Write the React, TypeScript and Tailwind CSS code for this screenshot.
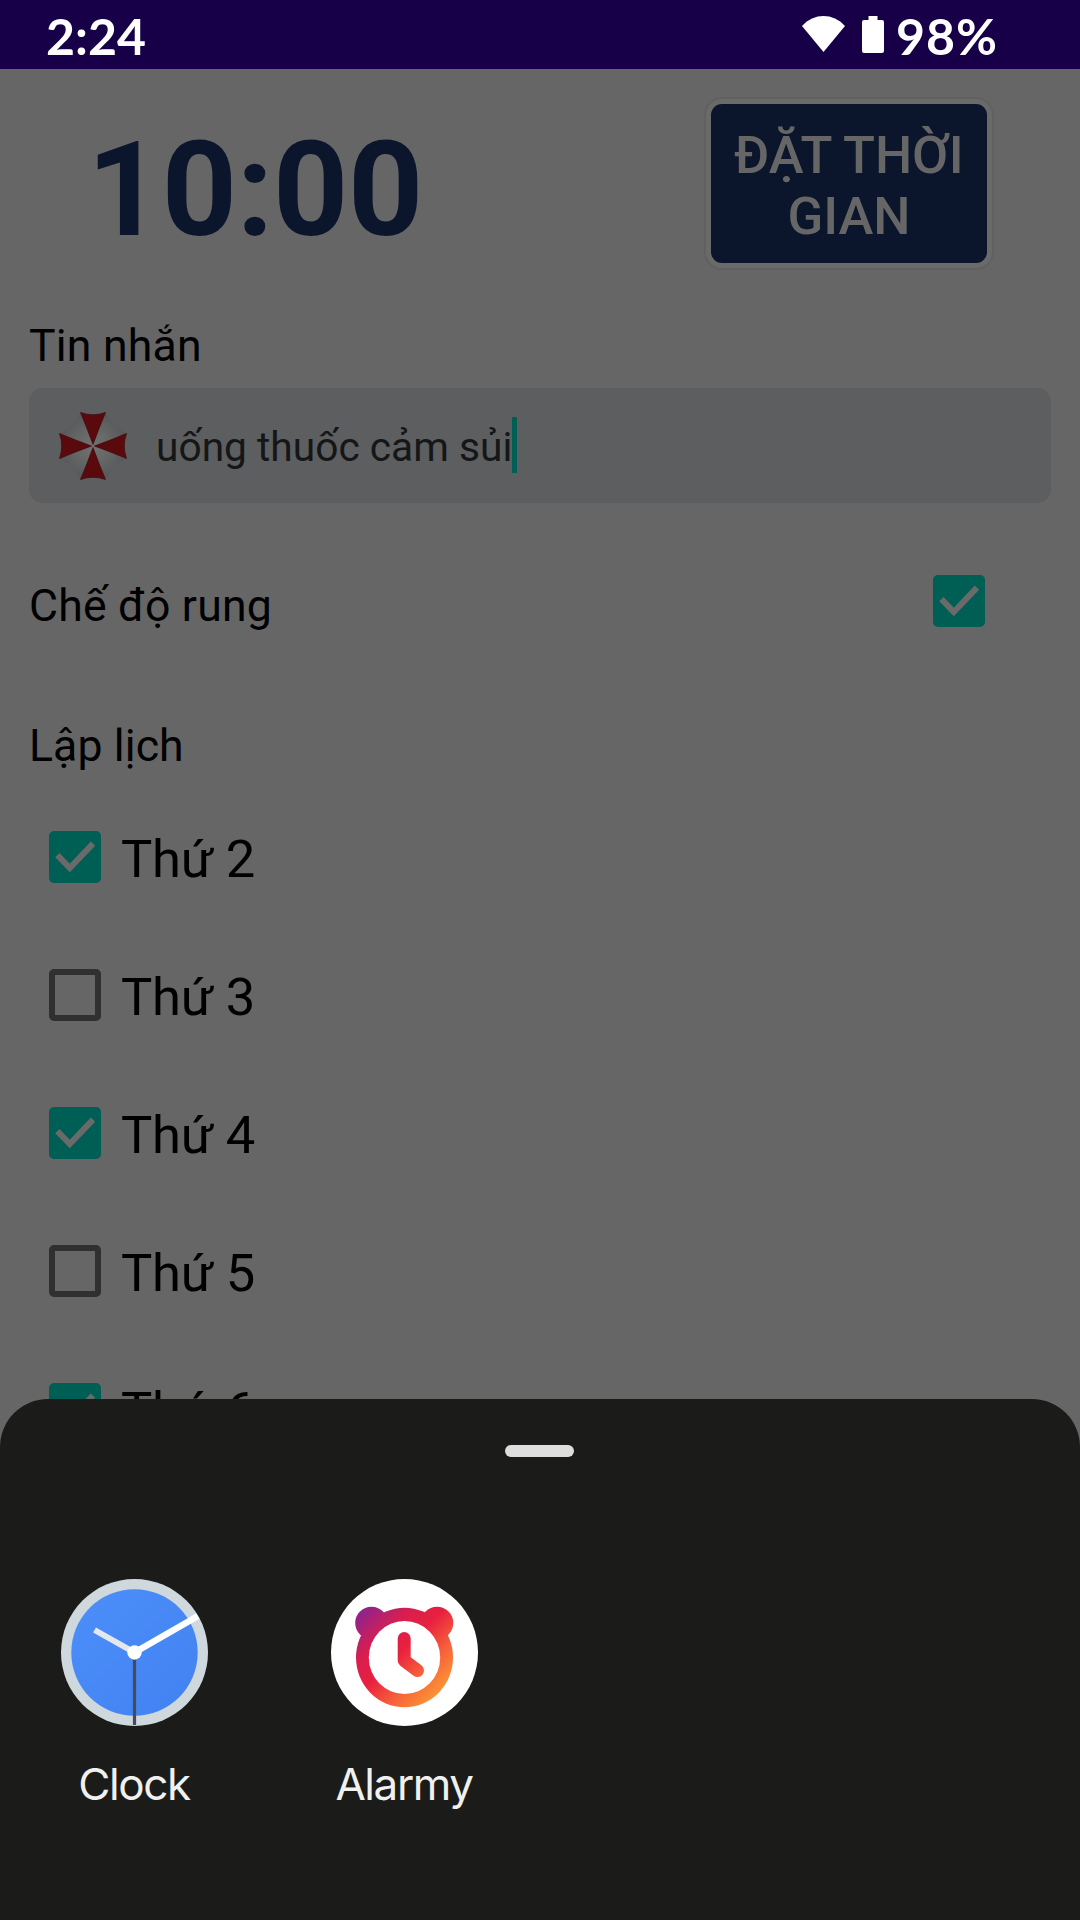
const days = [
  { label: 'Thứ 2', checked: true },
  { label: 'Thứ 3', checked: false },
  { label: 'Thứ 4', checked: true },
  { label: 'Thứ 5', checked: false },
  { label: 'Thứ 6', checked: true },
];

function CheckBox({ checked }: { checked: boolean }) {
  if (!checked) {
    return <span className="block size-[52px] shrink-0 rounded-[5px] border-[6px] border-[#303030]" />;
  }
  return (
    <span className="block size-[52px] shrink-0 rounded-[5px] bg-[#005f55]">
      <svg viewBox="0 0 52 52" className="size-full" fill="none">
        <path d="M8.4 24.2 20.8 37 44 12.6" stroke="#6a6a6a" strokeWidth="6" />
      </svg>
    </span>
  );
}

function StatusBar() {
  return (
    <header className="flex h-[69px] items-start justify-between bg-[#170047] pr-[82px] pl-[46px] font-['Lato'] text-white">
      <span className="mt-[2px] text-[50px] leading-[68px] font-bold">2:24</span>
      <div className="flex items-start">
        <svg width="43" height="36" viewBox="0 0 43 36" className="mt-[16px] mr-[17px]" fill="#fff">
          <path d="M0 10C12-3.300 31-3.300 43 10L21.500 36Z" />
        </svg>
        <svg width="22" height="37" viewBox="0 0 22 37" className="mt-[16px] mr-[12px]" fill="#fff">
          <path d="M6.500 0h9v4H20a2 2 0 0 1 2 2v29a2 2 0 0 1-2 2H2a2 2 0 0 1-2-2V6a2 2 0 0 1 2-2h4.500z" />
        </svg>
        <span className="mt-[2px] text-[50px] leading-[68px] font-bold tracking-[1px]">98%</span>
      </div>
    </header>
  );
}

function UmbrellaIcon() {
  return (
    <svg width="70" height="70" viewBox="-35 -35 70 70" className="shrink-0">
      <defs>
        <radialGradient id="canopy">
          <stop offset="0" stopColor="#727272" />
          <stop offset="0.5" stopColor="#666767" />
          <stop offset="1" stopColor="#58595b" />
        </radialGradient>
      </defs>
      <path d="M-13-33Q-20-19-33-13Q-27 0-33 13Q-20 19-13 33Q0 28 13 33Q20 19 33 13Q27 0 33-13Q20-19 13-33Q0-28-13-33Z" fill="url(#canopy)" />
      {[0, 90, 180, 270].map((angle) => (
        <path
          key={angle}
          d="M0-1.500Q-6-18-12.500-33.500Q0-29 12.500-33.500Q6-18 0-1.500Z"
          fill="#5a0a0d"
          stroke="#3c0a0c"
          strokeWidth="0.700"
          transform={`rotate(${angle})`}
        />
      ))}
    </svg>
  );
}

function ClockIcon() {
  return (
    <svg width="147" height="147" viewBox="0 0 147 147">
      <defs>
        <linearGradient id="face" x1="0" y1="0" x2="1" y2="1">
          <stop offset="0" stopColor="#4c8efa" />
          <stop offset="1" stopColor="#4182f0" />
        </linearGradient>
        <clipPath id="rim">
          <circle cx="73.500" cy="73.500" r="73.500" />
        </clipPath>
      </defs>
      <circle cx="73.500" cy="73.500" r="73.500" fill="#cfd8dc" />
      <circle cx="73.500" cy="73.500" r="63.200" fill="url(#face)" />
      <g clipPath="url(#rim)">
        <path d="M73.500 73.500 33.500 51" stroke="#e4e8eb" strokeWidth="6" />
        <path d="M73.500 73.500 137 37" stroke="#fff" strokeWidth="6.500" />
        <path d="M73.500 73.500V146" stroke="#484a5c" strokeWidth="3.200" />
      </g>
      <circle cx="73.500" cy="73.500" r="7.200" fill="#fff" />
    </svg>
  );
}

function AlarmyIcon() {
  return (
    <svg width="147" height="147" viewBox="0 0 147 147">
      <defs>
        <linearGradient id="warm" gradientUnits="userSpaceOnUse" x1="28" y1="32" x2="114" y2="118">
          <stop offset="0" stopColor="#8a2390" />
          <stop offset="0.280" stopColor="#d81e50" />
          <stop offset="0.480" stopColor="#e8203f" />
          <stop offset="0.720" stopColor="#f7603a" />
          <stop offset="1" stopColor="#fba233" />
        </linearGradient>
      </defs>
      <circle cx="73.500" cy="73.500" r="73.500" fill="#fff" />
      <g fill="url(#warm)">
        <circle cx="40.500" cy="44" r="16.300" />
        <circle cx="106" cy="44" r="16.300" />
        <ellipse cx="73.500" cy="78.500" rx="48.500" ry="49.700" />
      </g>
      <ellipse cx="73.500" cy="78.500" rx="35.700" ry="36.500" fill="#fff" />
      <path d="M73.200 59.500V81.500L86.500 91.500" fill="none" stroke="url(#warm)" strokeWidth="13" strokeLinecap="round" strokeLinejoin="round" />
    </svg>
  );
}

function AppChoice({ icon, name }: { icon: React.ReactNode; name: string }) {
  return (
    <div className="flex w-[270px] flex-col items-center">
      {icon}
      <span className="mt-[31px] text-[44px] leading-[54px] tracking-[-1.4px]">{name}</span>
    </div>
  );
}

export default function App() {
  return (
    <div className="relative h-[1920px] w-[1080px] overflow-hidden bg-[#666666] font-['Roboto',sans-serif] text-black">
      <StatusBar />

      <section className="flex h-[251px] items-start justify-between pr-[86px] pl-[87px]">
        <div className="mt-[55px] text-[131.25px] leading-[132px] font-bold tracking-[-0.5px] text-[#0b162d]">10:00</div>
        <div className="mt-[28px] rounded-[18px] border-2 border-[#616161] bg-[#6a6a6a] p-[5px]">
          <button className="flex h-[159px] w-[276px] items-center justify-center rounded-[11px] bg-[#0b162d] pt-[4px] text-center text-[52.5px] leading-[61px] font-medium text-[#666666]">
            ĐẶT THỜI
            <br />
            GIAN
          </button>
        </div>
      </section>

      <main className="px-[29px]">
        <h2 className="text-[44.6px] leading-[52px] tracking-[0.2px]">Tin nhắn</h2>
        <div className="mt-4 flex h-[115px] items-center rounded-[14px] bg-[#5c5e60] pl-[29px]">
          <UmbrellaIcon />
          <span className="mt-[3px] ml-[28px] text-[40.7px] leading-[52px] text-[#151617]">uống thuốc cảm sủi</span>
          <span className="-mt-px h-[56px] w-[5px] bg-[#005f55]" />
        </div>

        <div className="mt-[72px] flex h-[57px] items-start justify-between pr-[66px]">
          <h2 className="mt-[5px] text-[44.6px] leading-[52px] tracking-[0.2px]">Chế độ rung</h2>
          <CheckBox checked />
        </div>

        <h2 className="mt-[88px] text-[44.6px] leading-[52px] tracking-[0.1px]">Lập lịch</h2>
        <ul className="mt-[59px] flex flex-col gap-[82px] pl-[20px]">
          {days.map((day) => (
            <li key={day.label} className="flex h-[56px] items-start gap-[20px]">
              <CheckBox checked={day.checked} />
              <span className="text-[52.5px] leading-[56px] tracking-[-0.25px]">{day.label}</span>
            </li>
          ))}
        </ul>
      </main>

      <div className="absolute inset-x-0 bottom-0 flex h-[521px] flex-col items-center rounded-t-[48px] bg-[#1b1c1a]">
        <span className="mt-[46px] mr-[1px] h-[12px] w-[69px] rounded-full bg-[#dedede]" />
        <div className="-ml-[2px] mt-[122px] flex w-full font-['Inter'] text-[#f0f1ee]">
          <AppChoice icon={<ClockIcon />} name="Clock" />
          <AppChoice icon={<AlarmyIcon />} name="Alarmy" />
        </div>
      </div>
    </div>
  );
}
